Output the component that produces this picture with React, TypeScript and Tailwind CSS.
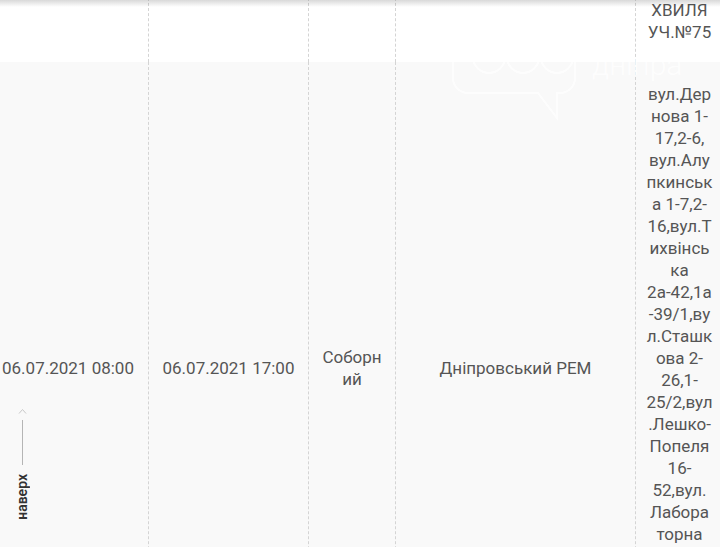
import React from 'react';

const cell = 'border-r border-dashed border-[#d4d4d4]';

const addressLines = [
  'вул.Дер',
  'нова 1-',
  '17,2-6,',
  'вул.Алу',
  'пкинськ',
  'а 1-7,2-',
  '16,вул.Т',
  'ихвінсь',
  'ка',
  '2а-42,1а',
  '-39/1,ву',
  'л.Сташк',
  'ова 2-',
  '26,1-',
  '25/2,вул',
  '.Лешко-',
  'Попеля',
  '16-',
  '52,вул.',
  'Лабора',
  'торна',
  '1-13,2-',
  '14,вул.Ч',
  'ернишевс',
  'ького 1-',
  '9,2-12',
];

const Watermark = () => (
  <svg
    className="absolute left-[440px] top-[20px] pointer-events-none opacity-80"
    width="260"
    height="110"
    viewBox="0 0 260 110"
    fill="none"
    stroke="#ffffff"
    strokeWidth="2"
  >
    <path d="M28 10 H120 a15 15 0 0 1 15 15 V58 a15 15 0 0 1 -15 15 H117 V98 L98 73 H28 a15 15 0 0 1 -15 -15 V25 a15 15 0 0 1 15 -15 Z" />
    <circle cx="49" cy="37" r="16" />
    <circle cx="83" cy="37" r="16" />
    <circle cx="117" cy="37" r="16" />
    <text x="152" y="55" fill="#ffffff" stroke="none" fontSize="30" fontFamily="Roboto, sans-serif" fontWeight="300">
      дніпра
    </text>
  </svg>
);

export default function App() {
  return (
    <div className="relative w-[720px] h-[547px] overflow-hidden bg-white font-['Roboto',sans-serif] text-[17px] leading-[22px] text-[#555]">
      <div className="-ml-[12px] -mt-[43px] grid grid-cols-[161px_160px_87px_240px_87px]">
        {/* previous row, mostly scrolled away */}
        <div className={`${cell} bg-white`} />
        <div className={`${cell} bg-white`} />
        <div className={`${cell} bg-white`} />
        <div className={`${cell} bg-white`} />
        <div className="bg-white px-1 pt-[20px] pb-[19px] text-center whitespace-nowrap">
          <div>НОВА</div>
          <div>ХВИЛЯ</div>
          <div>УЧ.№75</div>
        </div>

        {/* current row */}
        <div className={`${cell} bg-[#f9f9f9] flex items-center justify-center px-2 whitespace-nowrap`}>06.07.2021 08:00</div>
        <div className={`${cell} bg-[#f9f9f9] flex items-center justify-center px-2 whitespace-nowrap`}>06.07.2021 17:00</div>
        <div className={`${cell} bg-[#f9f9f9] flex flex-col items-center justify-center px-2 text-center`}>
          <span>Соборн</span>
          <span>ий</span>
        </div>
        <div className={`${cell} bg-[#f9f9f9] flex items-center justify-center px-2`}>Дніпровський РЕМ</div>
        <div className="bg-[#f9f9f9] px-1 pt-[20.5px] pb-[19.5px] text-center whitespace-nowrap">
          {addressLines.map((l, i) => (
            <div key={i}>{l}</div>
          ))}
        </div>
      </div>

      <Watermark />

      {/* header shadow */}
      <div className="absolute inset-x-0 top-0 h-[7px] bg-gradient-to-b from-black/15 to-transparent pointer-events-none" />

      {/* back to top */}
      <div className="absolute left-[12px] top-[408px] w-[20px] flex flex-col items-center">
        <svg width="9" height="6" viewBox="0 0 9 6" fill="none" stroke="#c8c8c8" strokeWidth="1">
          <polyline points="1,5.5 4.5,1.5 8,5.5" />
        </svg>
        <div className="mt-[6px] w-px h-[45px] bg-[#b5b5b5]" />
        <span className="mt-[9px] [writing-mode:vertical-rl] rotate-180 text-[14px] leading-[16px] font-semibold text-[#333] font-['Roboto',sans-serif]">
          наверх
        </span>
      </div>
    </div>
  );
}
